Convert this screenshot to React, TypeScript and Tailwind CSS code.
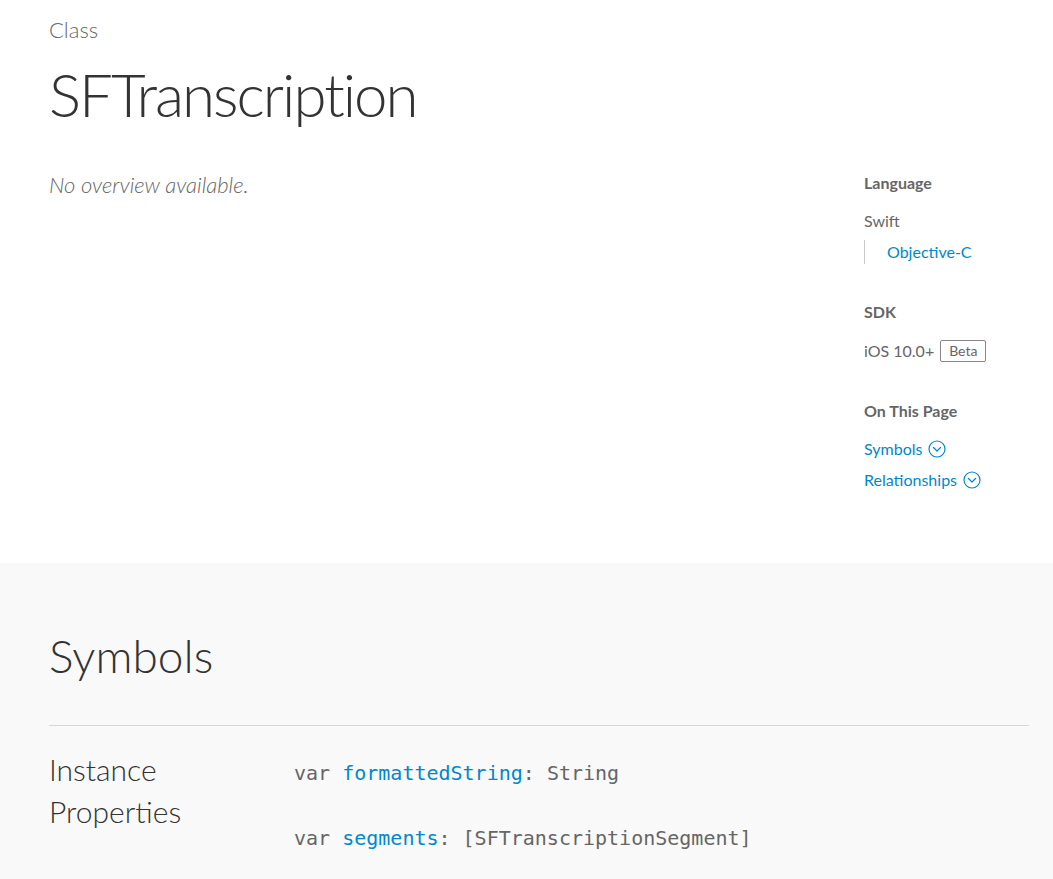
import React from 'react';

const SANS = { fontFamily: 'Lato, "Open Sans", sans-serif' };

function ChevronCircle() {
  return (
    <svg viewBox="0 0 18 18" className="ml-[6px] inline-block h-[18px] w-[18px] align-[-3px]" fill="none" stroke="currentColor" strokeWidth="1.2">
      <circle cx="9" cy="9" r="8" />
      <path d="M5.5 7.5 L9 11 L12.5 7.5" strokeLinecap="round" strokeLinejoin="round" />
    </svg>
  );
}

function Sidebar() {
  return (
    <aside className="w-[165px] shrink-0 text-[16px] text-[#666]">
      <h3 className="font-bold leading-[24px]">Language</h3>
      <p className="mt-[14px] leading-[24px]">Swift</p>
      <div className="mt-[7px] border-l border-[#ccc] pl-[22px] leading-[24px]">
        <a className="text-[#0088cc]">Objective-C</a>
      </div>

      <h3 className="mt-[36px] font-bold leading-[24px]">SDK</h3>
      <div className="mt-[15px] flex items-center gap-[6px] leading-[24px]">
        <span>iOS 10.0+</span>
        <span className="rounded-[2px] border border-[#888] px-[8px] text-[14px] leading-[20px]">Beta</span>
      </div>

      <h3 className="mt-[36px] font-bold leading-[24px]">On This Page</h3>
      <ul className="mt-[14px] space-y-[7px] text-[#0088cc]">
        <li className="leading-[24px]">
          Symbols
          <ChevronCircle />
        </li>
        <li className="leading-[24px]">
          Relationships
          <ChevronCircle />
        </li>
      </ul>
    </aside>
  );
}

export default function App() {
  return (
    <div className="min-h-screen bg-white" style={SANS}>
      <section className="px-[49px] pb-[71px] pr-[24px]">
        <p className="pt-[16px] text-[22px] font-light leading-[28px] text-[#666]">Class</p>
        <h1 className="mt-[12px] text-[60px] font-light leading-[76px] tracking-[-2px] text-[#333]">SFTranscription</h1>
        <div className="mt-[39px] flex">
          <p className="flex-1 text-[22px] font-light italic leading-[28px] text-[#666]">No overview available.</p>
          <Sidebar />
        </div>
      </section>

      <section className="bg-[#f9f9f9] px-[49px] pr-[24px] pt-[63px] pb-[40px]">
        <h2 className="text-[46px] font-light leading-[60px] text-[#333]">Symbols</h2>
        <div className="mt-[39px] border-t border-[#d6d6d6] pt-[22px]">
          <div className="flex">
            <h3 className="w-[245px] shrink-0 text-[30px] font-light leading-[42px] text-[#333]">
              Instance
              <br />
              Properties
            </h3>
            <div
              className="pt-[12px] text-[20px] leading-[26px] text-[#666]"
              style={{ fontFamily: '"DejaVu Sans Mono", "Liberation Mono", monospace' }}
            >
              <p>
                var <span className="text-[#0088cc]">formattedString</span>: String
              </p>
              <p className="mt-[39px]">
                var <span className="text-[#0088cc]">segments</span>: [SFTranscriptionSegment]
              </p>
            </div>
          </div>
        </div>
      </section>
    </div>
  );
}
